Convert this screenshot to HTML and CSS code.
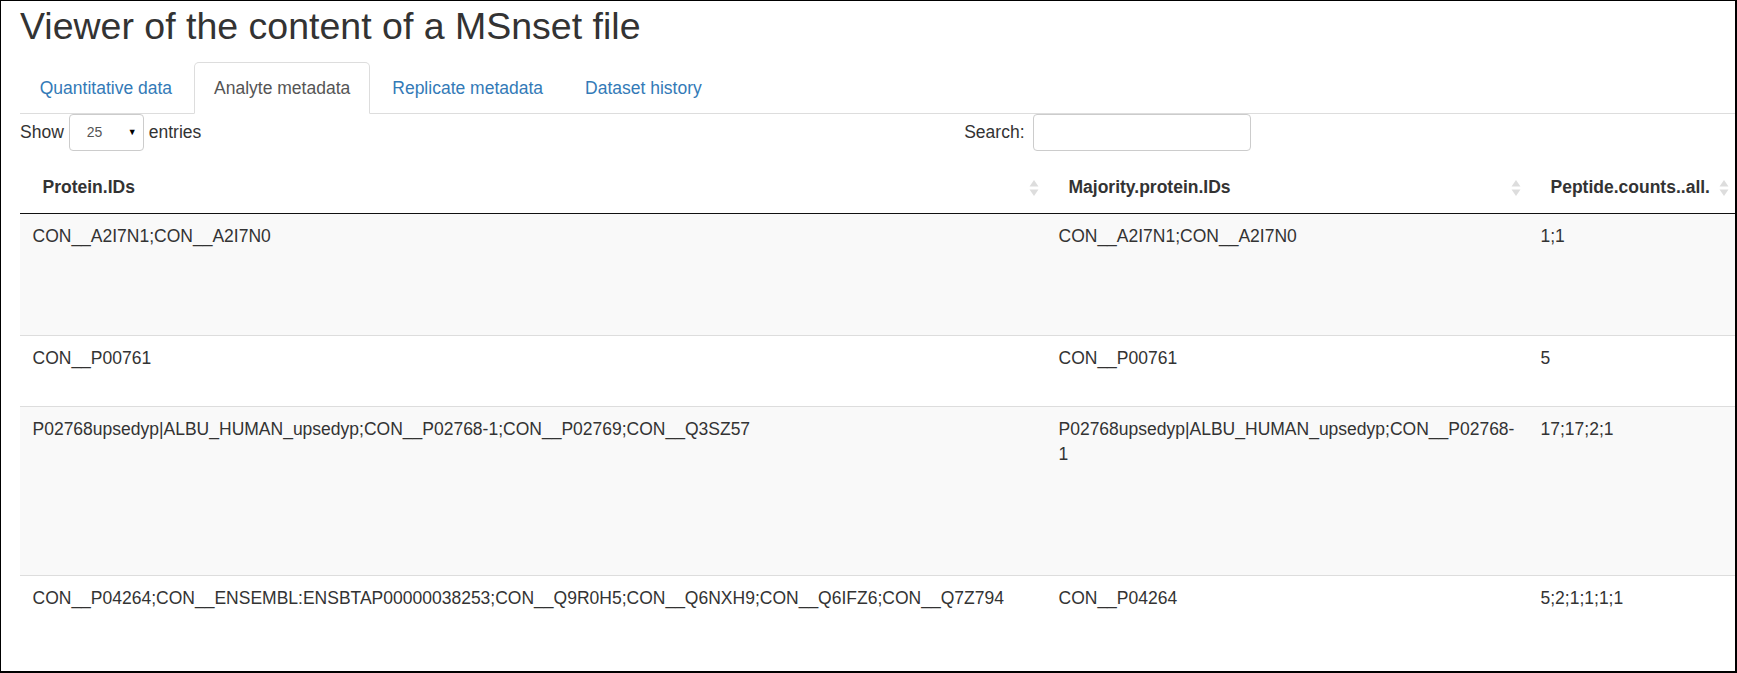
FILE: index.html
```html
<!DOCTYPE html>
<html lang="en">
<head>
<meta charset="utf-8">
<title>MSnset viewer</title>
<link rel="stylesheet" href="styles.css">
</head>
<body>
<div class="frame">
  <div class="container">
    <h2 class="title">Viewer of the content of a MSnset file</h2>
    <ul class="tabs">
      <li class="tab"><a>Quantitative data</a></li>
      <li class="tab active"><a>Analyte metadata</a></li>
      <li class="tab"><a>Replicate metadata</a></li>
      <li class="tab"><a>Dataset history</a></li>
    </ul>
    <div class="dt-controls">
      <div class="dt-length">
        <span>Show</span>
        <span class="select"><span class="select-val">25</span><span class="select-arrow">&#9660;</span></span>
        <span>entries</span>
      </div>
      <div class="dt-filter">
        <span>Search:</span>
        <span class="search-input"></span>
      </div>
    </div>
    <table class="dt">
      <colgroup>
        <col class="c1"><col class="c2"><col class="c3">
      </colgroup>
      <thead>
        <tr>
          <th><div class="th-in"><span>Protein.IDs</span><svg class="sort" viewBox="0 0 24 24" width="24" height="24"><path d="M7.5 10.5 L12 4 L16.5 10.5 Z"/><path d="M7.5 13.5 L12 20 L16.5 13.5 Z"/></svg></div></th>
          <th><div class="th-in"><span>Majority.protein.IDs</span><svg class="sort" viewBox="0 0 24 24" width="24" height="24"><path d="M7.5 10.5 L12 4 L16.5 10.5 Z"/><path d="M7.5 13.5 L12 20 L16.5 13.5 Z"/></svg></div></th>
          <th><div class="th-in"><span>Peptide.counts..all.</span><svg class="sort" viewBox="0 0 24 24" width="24" height="24"><path d="M7.5 10.5 L12 4 L16.5 10.5 Z"/><path d="M7.5 13.5 L12 20 L16.5 13.5 Z"/></svg></div></th>
        </tr>
      </thead>
      <tbody>
        <tr class="odd r1">
          <td>CON__A2I7N1;CON__A2I7N0</td>
          <td>CON__A2I7N1;CON__A2I7N0</td>
          <td>1;1</td>
        </tr>
        <tr class="even r2">
          <td>CON__P00761</td>
          <td>CON__P00761</td>
          <td>5</td>
        </tr>
        <tr class="odd r3">
          <td>P02768upsedyp|ALBU_HUMAN_upsedyp;CON__P02768-1;CON__P02769;CON__Q3SZ57</td>
          <td>P02768upsedyp|ALBU_HUMAN_upsedyp;CON__P02768-1</td>
          <td>17;17;2;1</td>
        </tr>
        <tr class="even r4">
          <td>CON__P04264;CON__ENSEMBL:ENSBTAP00000038253;CON__Q9R0H5;CON__Q6NXH9;CON__Q6IFZ6;CON__Q7Z794</td>
          <td>CON__P04264</td>
          <td>5;2;1;1;1;1</td>
        </tr>
      </tbody>
    </table>
  </div>
</div>
</body>
</html>
```
FILE: styles.css
```css
html, body {
  margin: 0;
  padding: 0;
  background: #fff;
}
body {
  font-family: "Liberation Sans", Arial, sans-serif;
  font-size: 17.5px;
  line-height: 25px;
  color: #333;
}
.frame {
  width: 1737px;
  height: 673px;
  box-sizing: border-box;
  border: 1px solid #000;
  border-right-width: 2px;
  border-bottom-width: 2px;
  overflow: hidden;
}
.container {
  padding: 0 0 0 19px;
}
.title {
  margin: 5px 0 15px;
  font-size: 37.5px;
  line-height: 41.25px;
  font-weight: 500;
  color: #333;
}
.tabs {
  display: flex;
  list-style: none;
  margin: 0;
  padding: 0;
  border-bottom: 1px solid #ddd;
}
.tab {
  margin-bottom: -1px;
}
.tab a {
  display: block;
  padding: 12.5px 18.75px;
  margin-right: 2.5px;
  line-height: 25px;
  border: 1px solid transparent;
  border-radius: 5px 5px 0 0;
  color: #337ab7;
  cursor: pointer;
}
.tab.active a {
  color: #555;
  background: #fff;
  border-color: #ddd #ddd transparent;
}
.dt-controls {
  width: 1231px;
  display: flex;
  justify-content: space-between;
  align-items: center;
  height: 37px;
  margin-top: 0;
}
.dt-length, .dt-filter {
  display: flex;
  align-items: center;
}
.select {
  box-sizing: border-box;
  width: 75px;
  height: 37px;
  margin: 0 5px 0 5px;
  border: 1px solid #ccc;
  border-radius: 4px;
  display: flex;
  align-items: center;
  justify-content: space-between;
  padding: 0 6px 0 17px;
  font-size: 14px;
}
.select-val {
  color: #555;
}
.select-arrow {
  font-size: 9px;
  color: #000;
}
.search-input {
  box-sizing: border-box;
  width: 218px;
  height: 37px;
  margin-left: 8.5px;
  border: 1px solid #ccc;
  border-radius: 4px;
}
.dt {
  margin-top: 11.5px;
  border-collapse: separate;
  border-spacing: 0;
  table-layout: fixed;
  width: 1716px;
}
.c1 { width: 1026px; }
.c2 { width: 482px; }
.c3 { width: 208px; }
.dt th {
  text-align: left;
  font-weight: bold;
  padding: 12.5px 0 12.5px 22.5px;
  border-bottom: 1px solid #111;
  line-height: 25px;
}
.th-in {
  display: flex;
  justify-content: space-between;
  align-items: center;
}
.sort {
  display: block;
  fill: #ddd;
  flex: none;
}
.dt td {
  padding: 10px 12.5px;
  vertical-align: top;
  border-top: 1px solid #ddd;
  line-height: 25px;
}
.dt tbody tr:first-child td {
  border-top: none;
}
.dt tr.odd td {
  background: #f9f9f9;
}
.dt tr.even td {
  background: #fff;
}
.r1 { height: 121px; }
.r2 { height: 71px; }
.r3 { height: 169px; }
.r4 { height: 120px; }
```
